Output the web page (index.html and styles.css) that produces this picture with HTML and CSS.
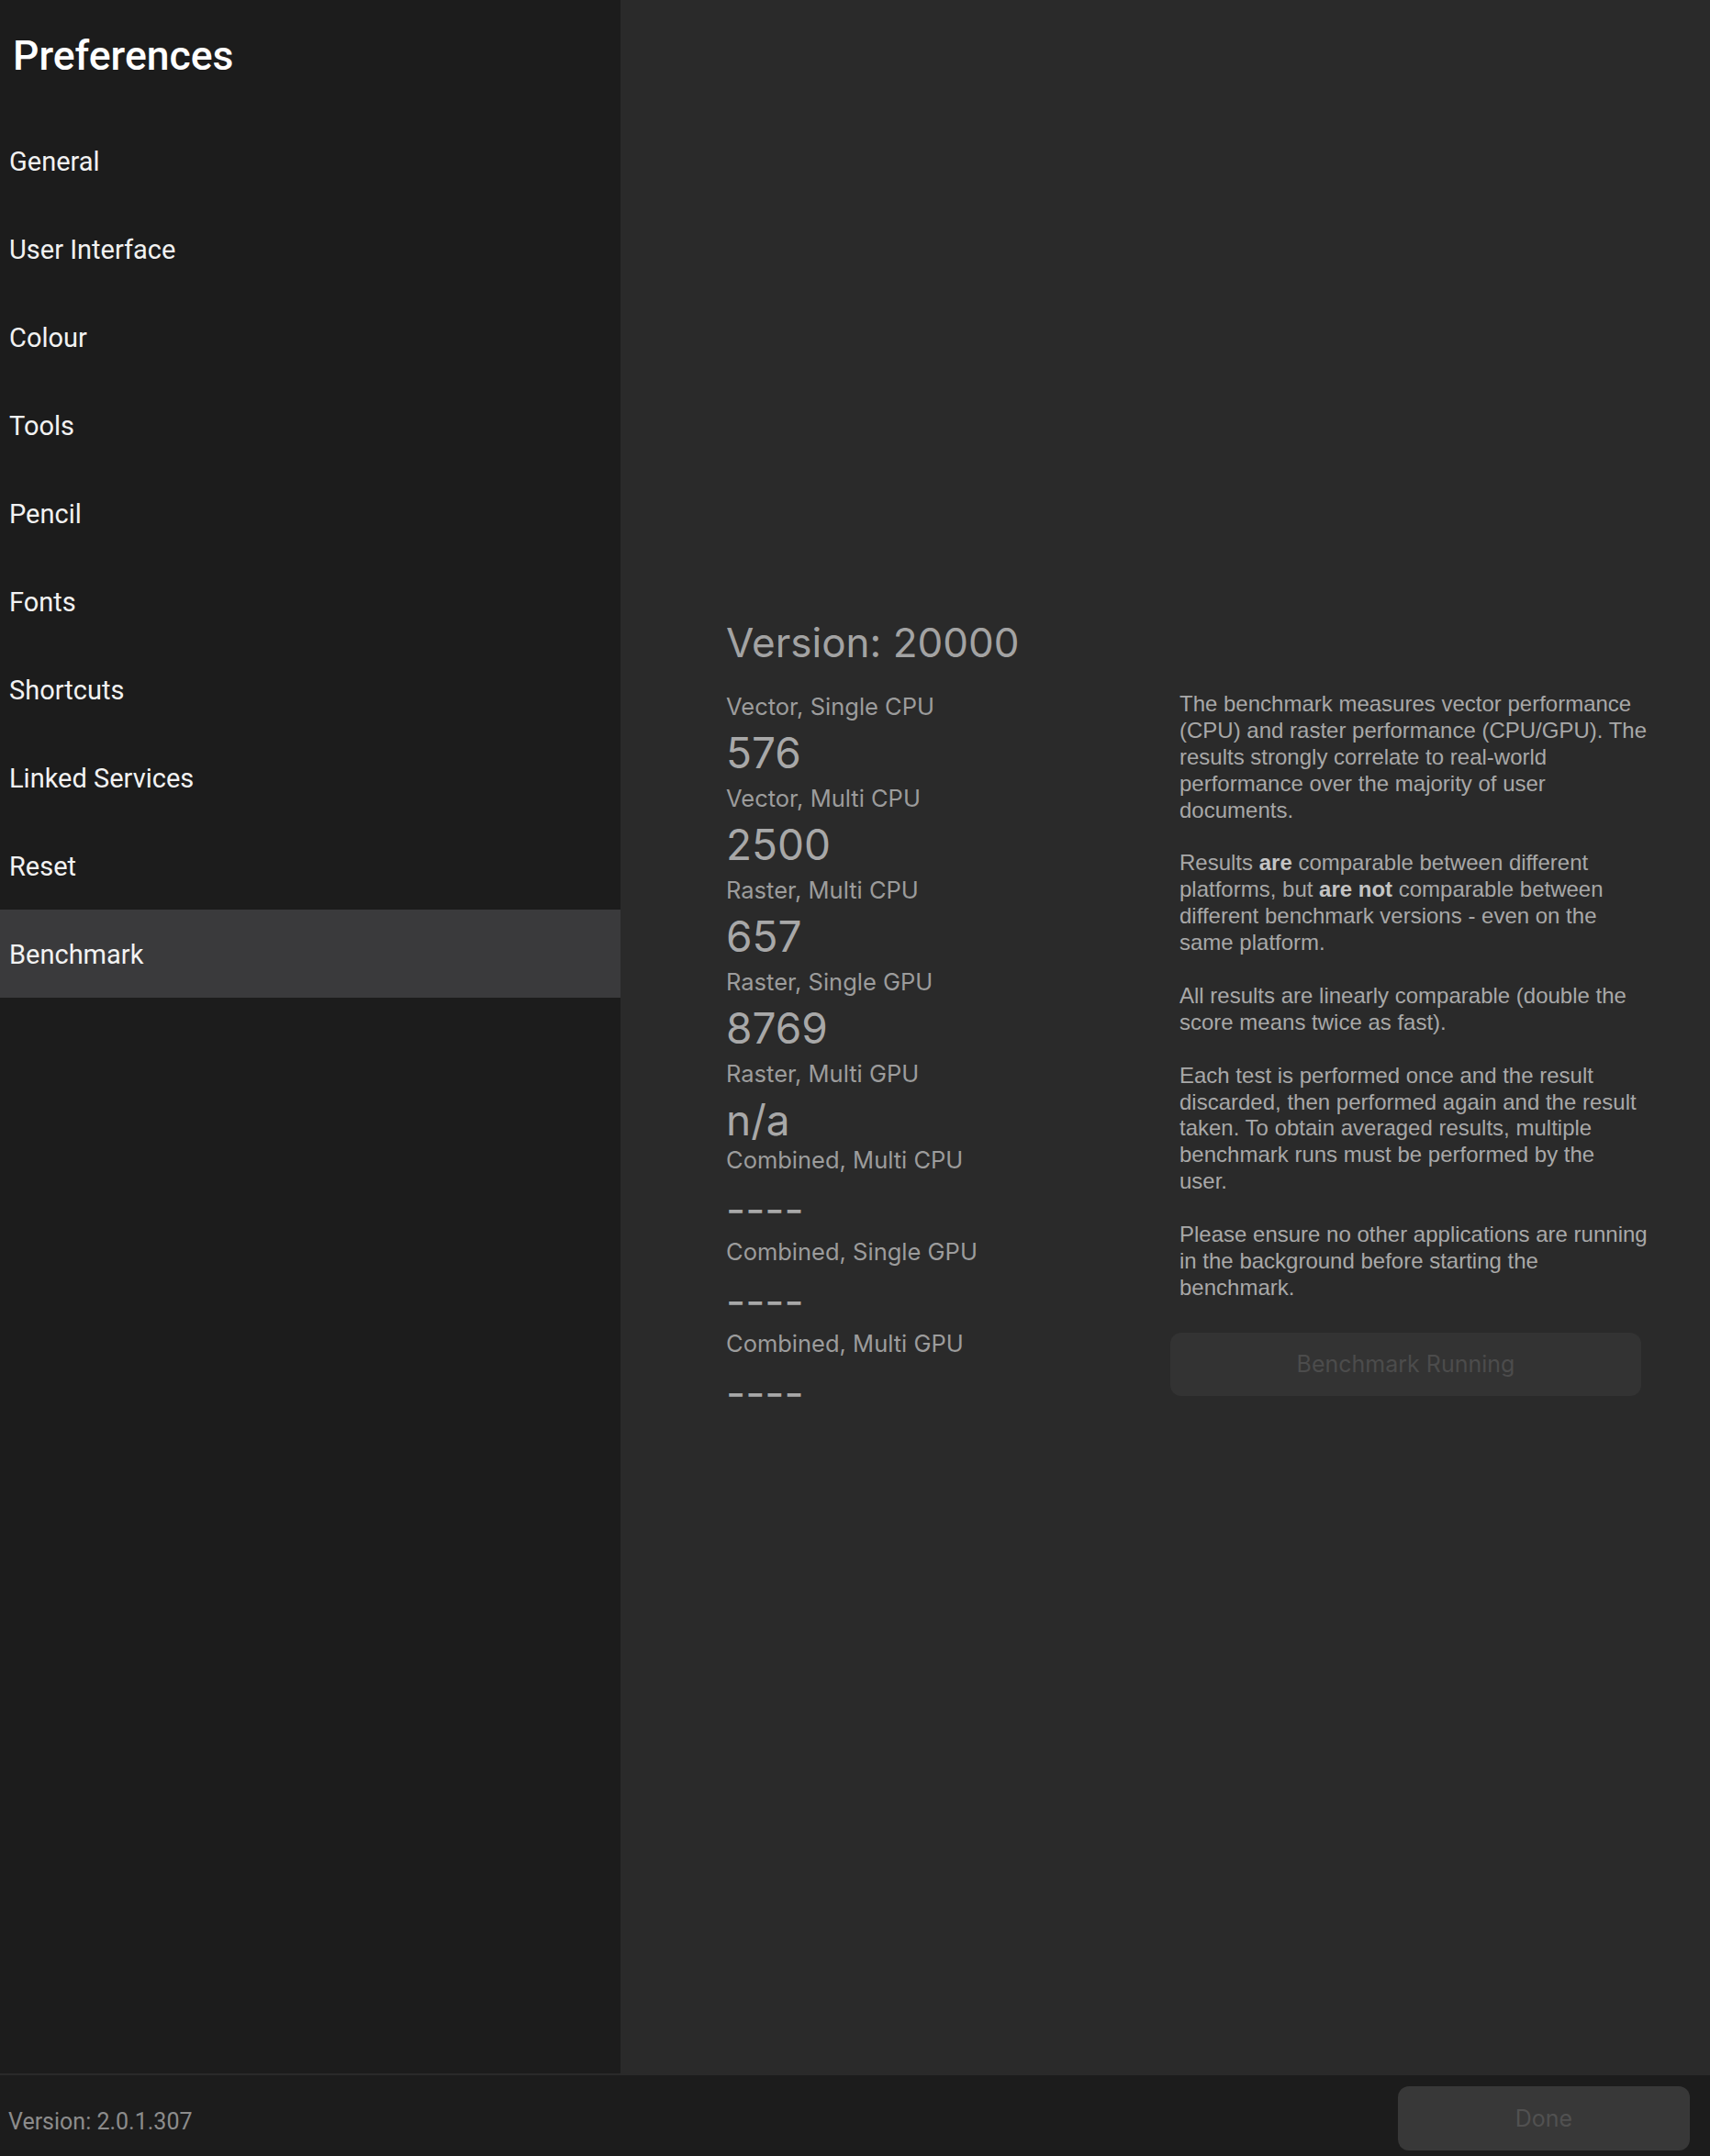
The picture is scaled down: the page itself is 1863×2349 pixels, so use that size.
FILE: index.html
```html
<!DOCTYPE html>
<html>
	<head>
		<meta charset="utf-8">
		<title>Preferences</title>
		<link rel="stylesheet" href="styles.css">
	</head>
	<body>
		<div class="app">
			<div class="top">
				<!-- left menu -->
				<div class="side">
					<h1 class="title">Preferences</h1>
					<ul class="menu">
						<li>General</li>
						<li>User Interface</li>
						<li>Colour</li>
						<li>Tools</li>
						<li>Pencil</li>
						<li>Fonts</li>
						<li>Shortcuts</li>
						<li>Linked Services</li>
						<li>Reset</li>
						<li class="active">Benchmark</li>
					</ul>
				</div>

				<!-- benchmark page -->
				<div class="main">
					<h2 class="version">Version: 20000</h2>
					<div class="cols">
						<div class="results">
							<div class="label">Vector, Single CPU</div>
							<div class="value">576</div>
							<div class="label">Vector, Multi CPU</div>
							<div class="value">2500</div>
							<div class="label">Raster, Multi CPU</div>
							<div class="value">657</div>
							<div class="label">Raster, Single GPU</div>
							<div class="value">8769</div>
							<div class="label">Raster, Multi GPU</div>
							<div class="value short">n/a</div>
							<div class="label">Combined, Multi CPU</div>
							<div class="value dash">----</div>
							<div class="label">Combined, Single GPU</div>
							<div class="value dash">----</div>
							<div class="label">Combined, Multi GPU</div>
							<div class="value dash">----</div>
						</div>
						<div class="info">
							<p>The benchmark measures vector performance (CPU) and raster performance (CPU/GPU). The results strongly correlate to real-world performance over the majority of user documents.</p>
							<p>Results <b>are</b> comparable between different platforms, but <b>are not</b> comparable between different benchmark versions - even on the same platform.</p>
							<p>All results are linearly comparable (double the score means twice as fast).</p>
							<p>Each test is performed once and the result discarded, then performed again and the result taken. To obtain averaged results, multiple benchmark runs must be performed by the user.</p>
							<p>Please ensure no other applications are running in the background before starting the benchmark.</p>
							<button class="run">Benchmark Running</button>
						</div>
					</div>
				</div>
			</div>

			<!-- bottom bar -->
			<div class="bottom">
				<span class="build">Version: 2.0.1.307</span>
				<button class="done">Done</button>
			</div>
		</div>
	</body>
</html>
```

FILE: styles.css
```css
* {
    margin: 0;
    padding: 0;
    box-sizing: border-box;
}

body {
    background: #1c1c1c;
    font-family: Roboto, "Liberation Sans", sans-serif;
}

.app {
    display: flex;
    flex-direction: column;
    width: 1863px;
    height: 2349px;
}

.top {
    display: flex;
    height: 2259px;
}

.side {
    width: 676px;
    background: #1c1c1c;
}

.title {
    height: 127px;
    padding: 31px 0 0 14px;
    font-size: 44.5px;
    font-weight: 500;
    line-height: 60px;
    color: #fff;
}

.menu {
    list-style: none;
}

.menu li {
    height: 96px;
    padding: 2px 0 0 10px;
    font-size: 29px;
    line-height: 94px;
    color: #f2f2f2;
}

.menu .active {
    background: #3a3a3c;
}

.main {
    flex: 1;
    padding: 670px 0 0 115px;
    background: #2a2a2a;
    font-family: Inter, "Liberation Sans", sans-serif;
}

.version {
    height: 60px;
    margin-bottom: 20px;
    font-size: 44px;
    font-weight: 400;
    line-height: 60px;
    color: #a3a3a3;
}

.cols {
    display: flex;
}

.results {
    width: 484px;
}

.label {
    height: 40px;
    font-size: 25.5px;
    line-height: 40px;
    color: #9c9c9c;
}

.value {
    height: 60px;
    font-size: 46px;
    line-height: 60px;
    color: #a8a8a8;
}

.results .short {
    height: 54px;
}

.results .dash {
    padding-top: 3px;
}

.info {
    display: flex;
    flex-direction: column;
    width: 520px;
    padding-top: 3px;
}

.info p {
    margin-bottom: 28.9px;
    padding-left: 10px;
    font-family: "Liberation Sans", Arial, sans-serif;
    font-size: 24px;
    line-height: 28.9px;
    color: #a8a8a8;
}

.info b {
    color: #c4c4c4;
}

.run {
    width: 513px;
    height: 69px;
    margin-top: 5px;
    border: none;
    border-radius: 12px;
    background: #333333;
    font-family: Inter, sans-serif;
    font-size: 25px;
    color: #4c4c4c;
}

.bottom {
    display: flex;
    align-items: center;
    justify-content: space-between;
    height: 90px;
    padding: 0 22px 0 9px;
    border-top: 2px solid #2a2a2a;
    background: #1c1c1c;
}

.build {
    margin-top: 12px;
    font-size: 25px;
    color: #8c8c8c;
}

.done {
    width: 318px;
    height: 70px;
    margin-top: 6px;
    border: none;
    border-radius: 12px;
    background: #383838;
    font-family: Inter, sans-serif;
    font-size: 25px;
    color: #515151;
}
```
